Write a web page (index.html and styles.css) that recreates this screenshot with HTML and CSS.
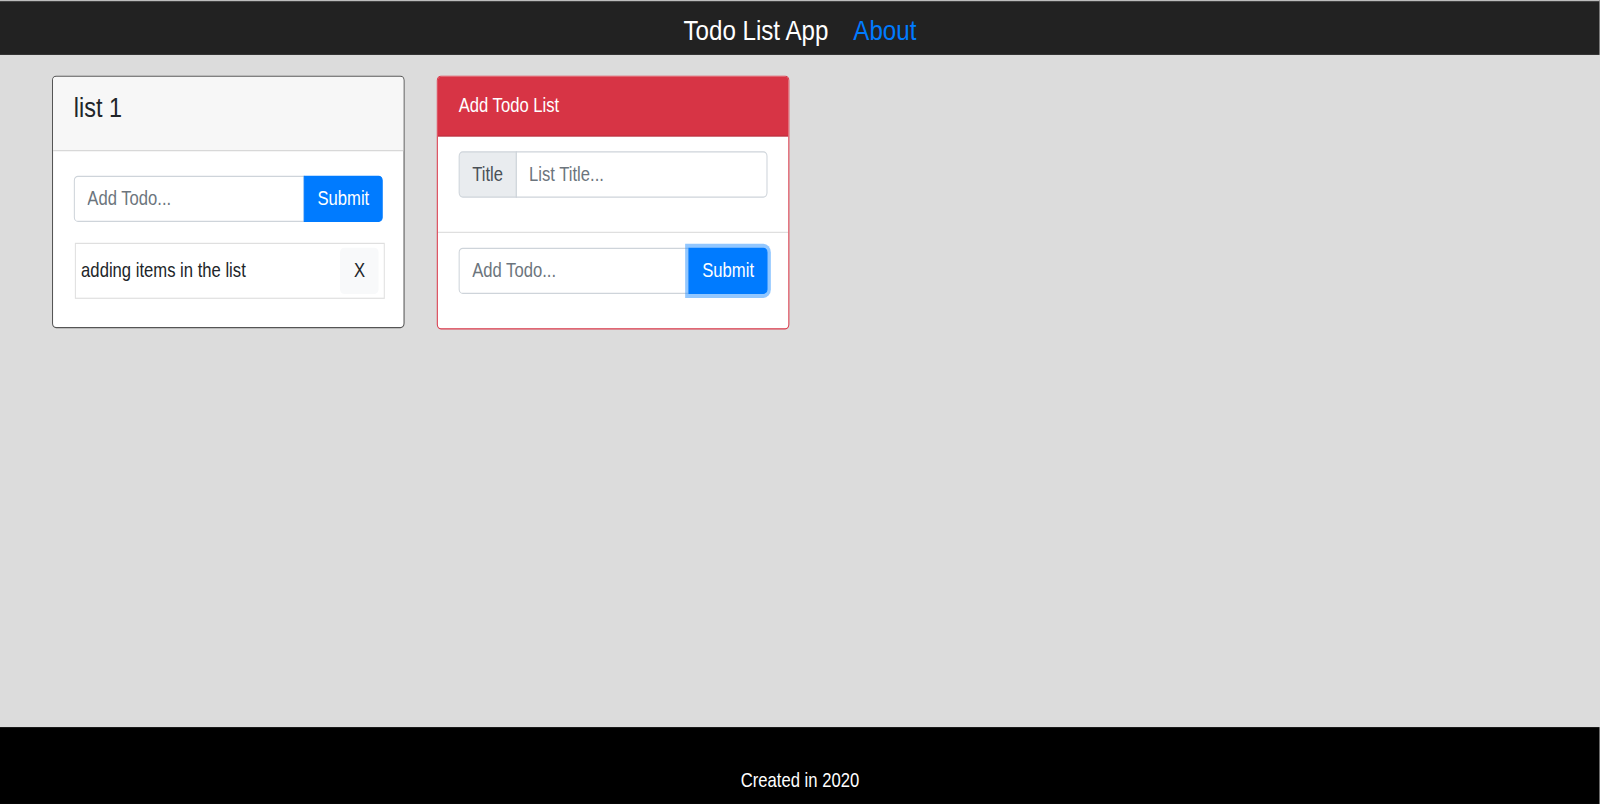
FILE: index.html
```html
<!DOCTYPE html>
<html lang="en">
<head>
<meta charset="utf-8">
<title>Todo List App</title>
<link rel="stylesheet" href="styles.css">
</head>
<body>
<div class="app">
  <header class="topbar">
    <span class="brand">Todo List App</span>
    <a class="nav-link" href="#">About</a>
  </header>
  <main class="board">
    <section class="card card-list">
      <div class="card-header header-light">
        <h4 class="list-title">list 1</h4>
      </div>
      <div class="card-body">
        <form class="input-group gap-below">
          <input class="form-control" type="text" placeholder="Add Todo...">
          <button class="btn btn-primary" type="button">Submit</button>
        </form>
        <div class="todo-item">
          <span class="todo-text">adding items in the list</span>
          <button class="btn btn-light" type="button">X</button>
        </div>
      </div>
    </section>
    <section class="card card-danger">
      <div class="card-header header-danger">Add Todo List</div>
      <div class="card-section">
        <div class="input-group gap-below">
          <span class="input-group-text">Title</span>
          <input class="form-control" type="text" placeholder="List Title...">
        </div>
      </div>
      <div class="card-section section-sep">
        <form class="input-group gap-below">
          <input class="form-control" type="text" placeholder="Add Todo...">
          <button class="btn btn-primary btn-focus" type="button">Submit</button>
        </form>
      </div>
    </section>
  </main>
  <footer class="footer">Created in 2020</footer>
</div>
</body>
</html>
```
FILE: styles.css
```css
* {
  box-sizing: border-box;
}

html {
  overflow: hidden;
  background: #dcdcdc;
}

body {
  margin: 0;
  padding: 0;
  width: 1600px;
  height: 804px;
  overflow: hidden;
  font-family: "Liberation Sans", Arial, sans-serif;
  font-size: 16px;
  line-height: 1.5;
  color: #212529;
  background: #dcdcdc;
}

.app {
  width: 1538.4px;
  height: 659px;
  display: flex;
  flex-direction: column;
  background: #dcdcdc;
  transform: scale(1.04, 1.22);
  transform-origin: 0 0;
}

/* Top bar */
.topbar {
  flex: 0 0 45px;
  display: flex;
  justify-content: center;
  align-items: center;
  gap: 24px;
  padding-top: 5px;
  background: #222222;
  border-top: 1px solid #bdbdbd;
}

.brand {
  color: #ffffff;
  font-size: 23.2px;
  line-height: 1;
}

.nav-link {
  color: #007bff;
  font-size: 23.2px;
  line-height: 1;
  text-decoration: none;
}

/* Board */
.board {
  flex: 1 1 auto;
  display: flex;
  align-items: flex-start;
  gap: 31px;
  padding: 16.5px 0 0 50px;
}

.card {
  flex: 0 0 339px;
  background: #ffffff;
  border: 1px solid rgba(0, 0, 0, 0.125);
  border-radius: 4px;
  overflow: hidden;
}

.card-list {
  border-color: #555555;
}

.card-danger {
  border-color: #d9394a;
}

.card-header {
  padding: 12px 20px;
  border-bottom: 1px solid rgba(0, 0, 0, 0.125);
}

.header-light {
  background: #f7f7f7;
}

.header-danger {
  background: #d73445;
  color: #ffffff;
  line-height: 24px;
}

.list-title {
  margin: 0 0 8px;
  font-size: 22.5px;
  font-weight: 400;
  line-height: 27px;
  padding-bottom: 1px;
}

.card-body {
  padding: 20px;
}

.card-section {
  padding: 12px 20px;
}

.section-sep {
  border-top: 1px solid rgba(0, 0, 0, 0.125);
}

/* Inputs */
.input-group {
  display: flex;
  align-items: stretch;
  margin: 0;
}

.gap-below {
  margin-bottom: 16px;
}

.card-body .gap-below {
  margin-bottom: 17px;
}

.form-control {
  flex: 1 1 auto;
  min-width: 0;
  height: 38px;
  padding: 6px 12px;
  font-family: inherit;
  font-size: 16px;
  line-height: 1.5;
  color: #495057;
  background: #ffffff;
  border: 1px solid #ced4da;
  border-radius: 4px;
  outline: none;
}

.form-control::placeholder {
  color: #6c757d;
  opacity: 1;
}

.input-group-text {
  display: flex;
  align-items: center;
  height: 38px;
  padding: 6px 12px;
  font-size: 16px;
  line-height: 1.5;
  color: #495057;
  background: #e9ecef;
  border: 1px solid #ced4da;
  border-radius: 4px 0 0 4px;
}

.input-group-text + .form-control {
  margin-left: -1px;
  border-radius: 0 4px 4px 0;
}

.input-group .form-control:first-child {
  border-radius: 4px 0 0 4px;
}

.input-group .btn {
  margin-left: -1px;
  border-radius: 0 4px 4px 0;
}

/* Buttons */
.btn {
  height: 38px;
  padding: 6px 12px;
  font-family: inherit;
  font-size: 16px;
  line-height: 1.5;
  border: 1px solid transparent;
  border-radius: 4px;
  cursor: pointer;
}

.btn-primary {
  color: #ffffff;
  background: #007bff;
  border-color: #007bff;
}

.btn-focus {
  position: relative;
  z-index: 2;
  box-shadow: 0 0 0 3.2px rgba(38, 143, 255, 0.5);
}

.btn-light {
  color: #212529;
  background: #f8f9fa;
  border-color: #f8f9fa;
}

/* Todo item */
.todo-item {
  display: flex;
  justify-content: space-between;
  align-items: center;
  padding: 3px 5px;
  margin: 0 -2px 3px 1px;
  border: 1px solid rgba(0, 0, 0, 0.125);
}

.todo-text {
  color: #212529;
}

/* Footer */
.footer {
  flex: 0 0 63px;
  padding: 32px 0 7px;
  line-height: 24px;
  text-align: center;
  color: #ffffff;
  background: #000000;
}
```
